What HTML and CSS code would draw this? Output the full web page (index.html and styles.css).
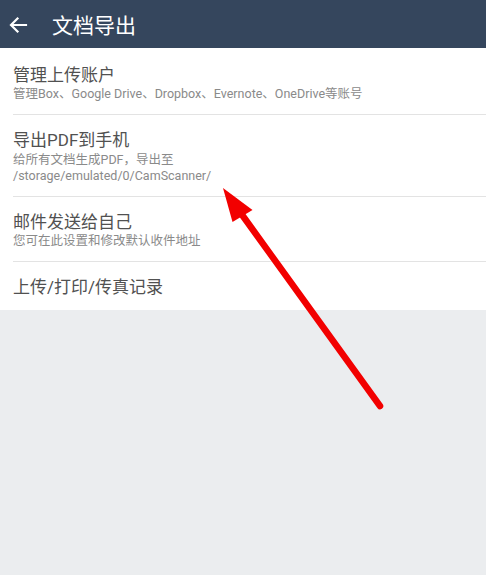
FILE: index.html
```html
<!DOCTYPE html>
<html lang="zh-CN">
<head>
<meta charset="utf-8">
<title>文档导出</title>
<link rel="stylesheet" href="styles.css">
</head>
<body>
<div class="app">
  <header class="toolbar">
    <svg class="back" width="20" height="20" viewBox="0 0 20 20" aria-hidden="true">
      <path d="M18 10H3.5M9.5 3.5L3 10l6.5 6.5" fill="none" stroke="#fff" stroke-width="2.2" stroke-linecap="square"/>
    </svg>
    <h1 class="title">文档导出</h1>
  </header>
  <ul class="list">
    <li class="item first">
      <div class="item-title">管理上传账户</div>
      <div class="item-sub">管理Box、Google Drive、Dropbox、Evernote、OneDrive等账号</div>
    </li>
    <li class="item">
      <div class="item-title">导出PDF到手机</div>
      <div class="item-sub">给所有文档生成PDF<span class="tc-punct">，</span>导出至<br>/storage/emulated/0/CamScanner/</div>
    </li>
    <li class="item">
      <div class="item-title">邮件发送给自己</div>
      <div class="item-sub">您可在此设置和修改默认收件地址</div>
    </li>
    <li class="item">
      <div class="item-title">上传/打印/传真记录</div>
    </li>
  </ul>
  <svg class="annotation" width="486" height="575" viewBox="0 0 486 575" aria-hidden="true">
    <line x1="380" y1="406" x2="240" y2="212" stroke="#f20000" stroke-width="6.5" stroke-linecap="round"/>
    <polygon points="223,188 232.5,222 252.5,210" fill="#f20000"/>
  </svg>
</div>
</body>
</html>
```
FILE: styles.css
```css
html, body {
  margin: 0;
  padding: 0;
  height: 100%;
}
body {
  background: #ebedef;
  font-family: Roboto, "Noto Sans CJK SC", sans-serif;
}
.app {
  position: relative;
  width: 486px;
  height: 575px;
  overflow: hidden;
}
.toolbar {
  height: 48px;
  background: #35465d;
  display: flex;
  align-items: center;
  padding-left: 8px;
  box-sizing: border-box;
}
.back {
  display: block;
  margin-top: 2px;
}
.title {
  margin: 0 0 0 24px;
  color: #fff;
  font-size: 21px;
  font-weight: normal;
  line-height: 1;
  font-family: "Noto Sans CJK SC", sans-serif;
}
.list {
  list-style: none;
  margin: 0;
  padding: 0;
  background: #fff;
}
.item {
  margin-left: 13px;
  padding: 14px 13px 12px 0;
  border-top: 1px solid #e3e3e3;
}
.item.first {
  border-top: none;
  padding-top: 16px;
}
.item-title {
  font-size: 17px;
  line-height: 22px;
  color: #515151;
}
.item-sub {
  font-size: 12.5px;
  line-height: 16px;
  color: #8a8a8a;
}
.tc-punct {
  font-family: "Noto Sans CJK TC", sans-serif;
}
.annotation {
  position: absolute;
  left: 0;
  top: 0;
  pointer-events: none;
}
```
